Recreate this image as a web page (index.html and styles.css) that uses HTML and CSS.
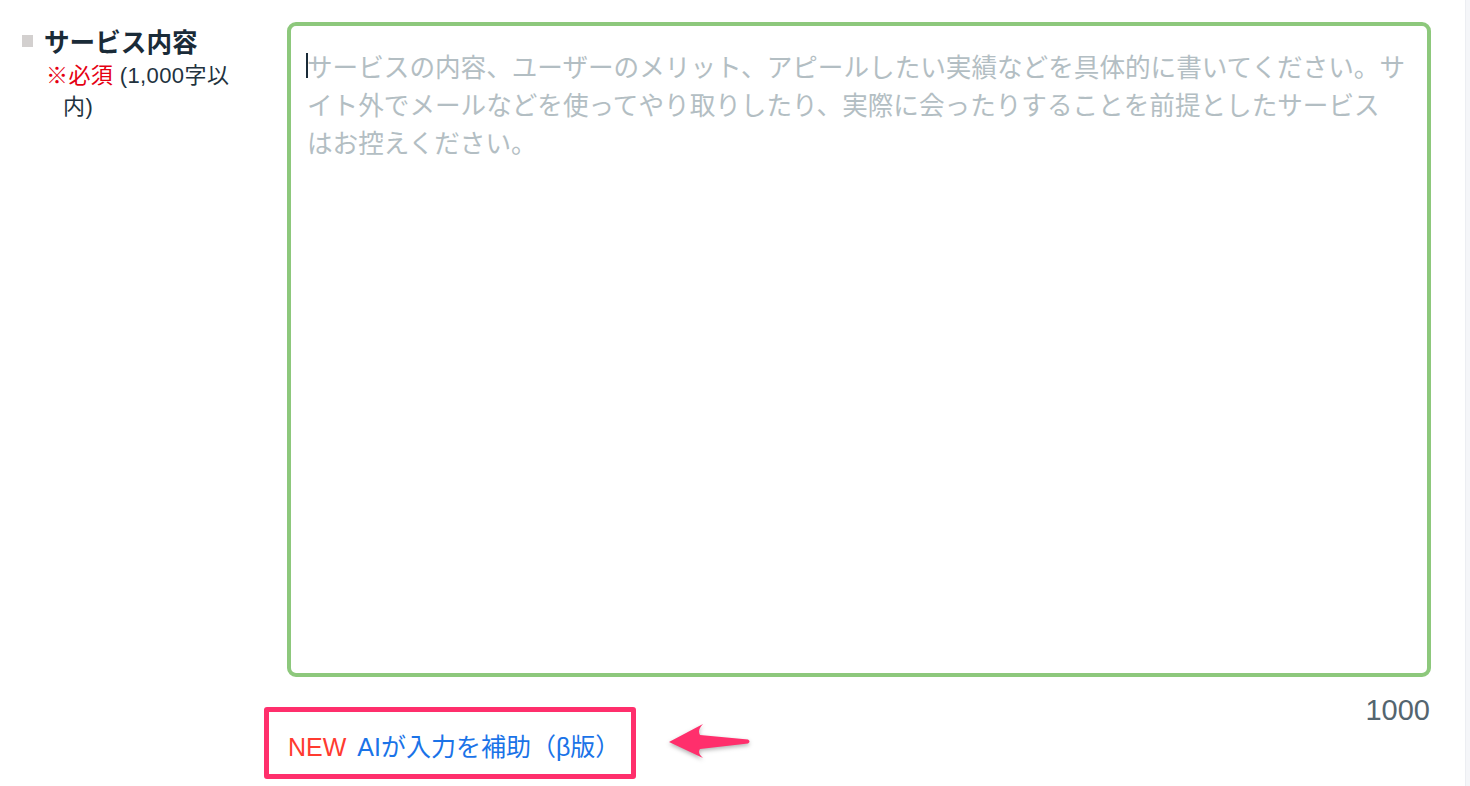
FILE: index.html
```html
<!DOCTYPE html>
<html lang="ja">
<head>
    <meta charset="UTF-8">
    <meta name="viewport" content="width=device-width, initial-scale=1.0">
    <title>サービス内容</title>
    <link rel="stylesheet" href="styles.css">
</head>
<body>
    <div class="page">
        <div class="form-row">
            <div class="form-label">
                <div class="label-title"><span class="label-mark"></span>サービス内容</div>
                <div class="label-note"><span class="required">※必須</span> (1,000字以内)</div>
            </div>
            <div class="form-field">
                <div class="text-wrap">
                    <textarea class="service-text" placeholder="サービスの内容、ユーザーのメリット、アピールしたい実績などを具体的に書いてください。サイト外でメールなどを使ってやり取りしたり、実際に会ったりすることを前提としたサービス&#10;はお控えください。"></textarea>
                    <span class="caret"></span>
                </div>
                <div class="field-foot">
                    <div class="ai-help">
                        <div class="ai-box">
                            <a class="ai-link" href="#"><span class="new">NEW</span>AIが入力を補助（β版）</a>
                        </div>
                        <svg class="ai-arrow" width="95" height="46" viewBox="0 0 95 46">
                            <path d="M9 22 L43 4 Q37 10 40 15 L88 19.5 Q91 21.5 88 23.5 L40 29 Q37 33 43 38 Z" fill="#ff2f6c"/>
                        </svg>
                    </div>
                    <div class="counter">1000</div>
                </div>
            </div>
        </div>
    </div>
</body>
</html>
```

FILE: styles.css
```css
body {
    margin: 0;
    padding: 0;
    background-color: #f5f6f9;
    font-family: "Liberation Sans", "Noto Sans CJK JP", sans-serif;
}

.page {
    width: 1465px;
    min-height: 100vh;
    background-color: #fff;
    border-right: 1px solid #eceef2;
}

.form-row {
    display: flex;
    padding-top: 22px;
}

.form-label {
    width: 287px;
    box-sizing: border-box;
    padding-left: 22px;
}

.label-title {
    display: flex;
    align-items: center;
    gap: 11px;
    font-family: "Noto Sans CJK JP", sans-serif;
    font-size: 25.6px;
    font-weight: bold;
    line-height: 38px;
    color: #1a2b38;
}

.label-mark {
    width: 11px;
    height: 12px;
    background-color: #d3d0cf;
}

.label-note {
    margin-left: 24px;
    width: 176px;
    padding-left: 17px;
    text-indent: -17px;
    font-size: 22px;
    line-height: 31px;
    letter-spacing: 0.4px;
    color: #22323e;
}

.required {
    color: #e50012;
}

.form-field {
    width: 1144px;
}

.text-wrap {
    position: relative;
}

.service-text {
    display: block;
    width: 100%;
    height: 655px;
    box-sizing: border-box;
    margin: 0;
    border: 4px solid #8dc87c;
    border-radius: 9px;
    padding: 21px 16px;
    font-family: "Noto Sans CJK JP", sans-serif;
    font-size: 25.6px;
    line-height: 38px;
    color: #1a2b38;
    resize: none;
    outline: none;
}

.service-text::placeholder {
    color: #b3bec3;
    opacity: 1;
}

.caret {
    position: absolute;
    left: 19px;
    top: 31px;
    width: 2px;
    height: 25px;
    background-color: #1a2b38;
}

.field-foot {
    display: flex;
    justify-content: space-between;
    align-items: flex-start;
    padding-top: 17px;
}

.ai-help {
    display: flex;
    align-items: center;
    gap: 24px;
    margin-left: -23px;
    margin-top: 13px;
}

.ai-box {
    display: flex;
    align-items: center;
    width: 372px;
    height: 72px;
    box-sizing: border-box;
    border: 5px solid #ff2f6c;
    border-radius: 3px;
    padding: 4px 0 0 19px;
}

.ai-link {
    font-size: 25px;
    color: #1a73e8;
    text-decoration: none;
}

.ai-link .new {
    color: #ff3b30;
    margin-right: 11px;
}

.ai-arrow {
    overflow: visible;
    filter: drop-shadow(0 2px 2px rgba(0, 0, 0, 0.3));
}

.counter {
    font-size: 29px;
    line-height: 32px;
    color: #54656f;
    margin-right: 1px;
}
```
